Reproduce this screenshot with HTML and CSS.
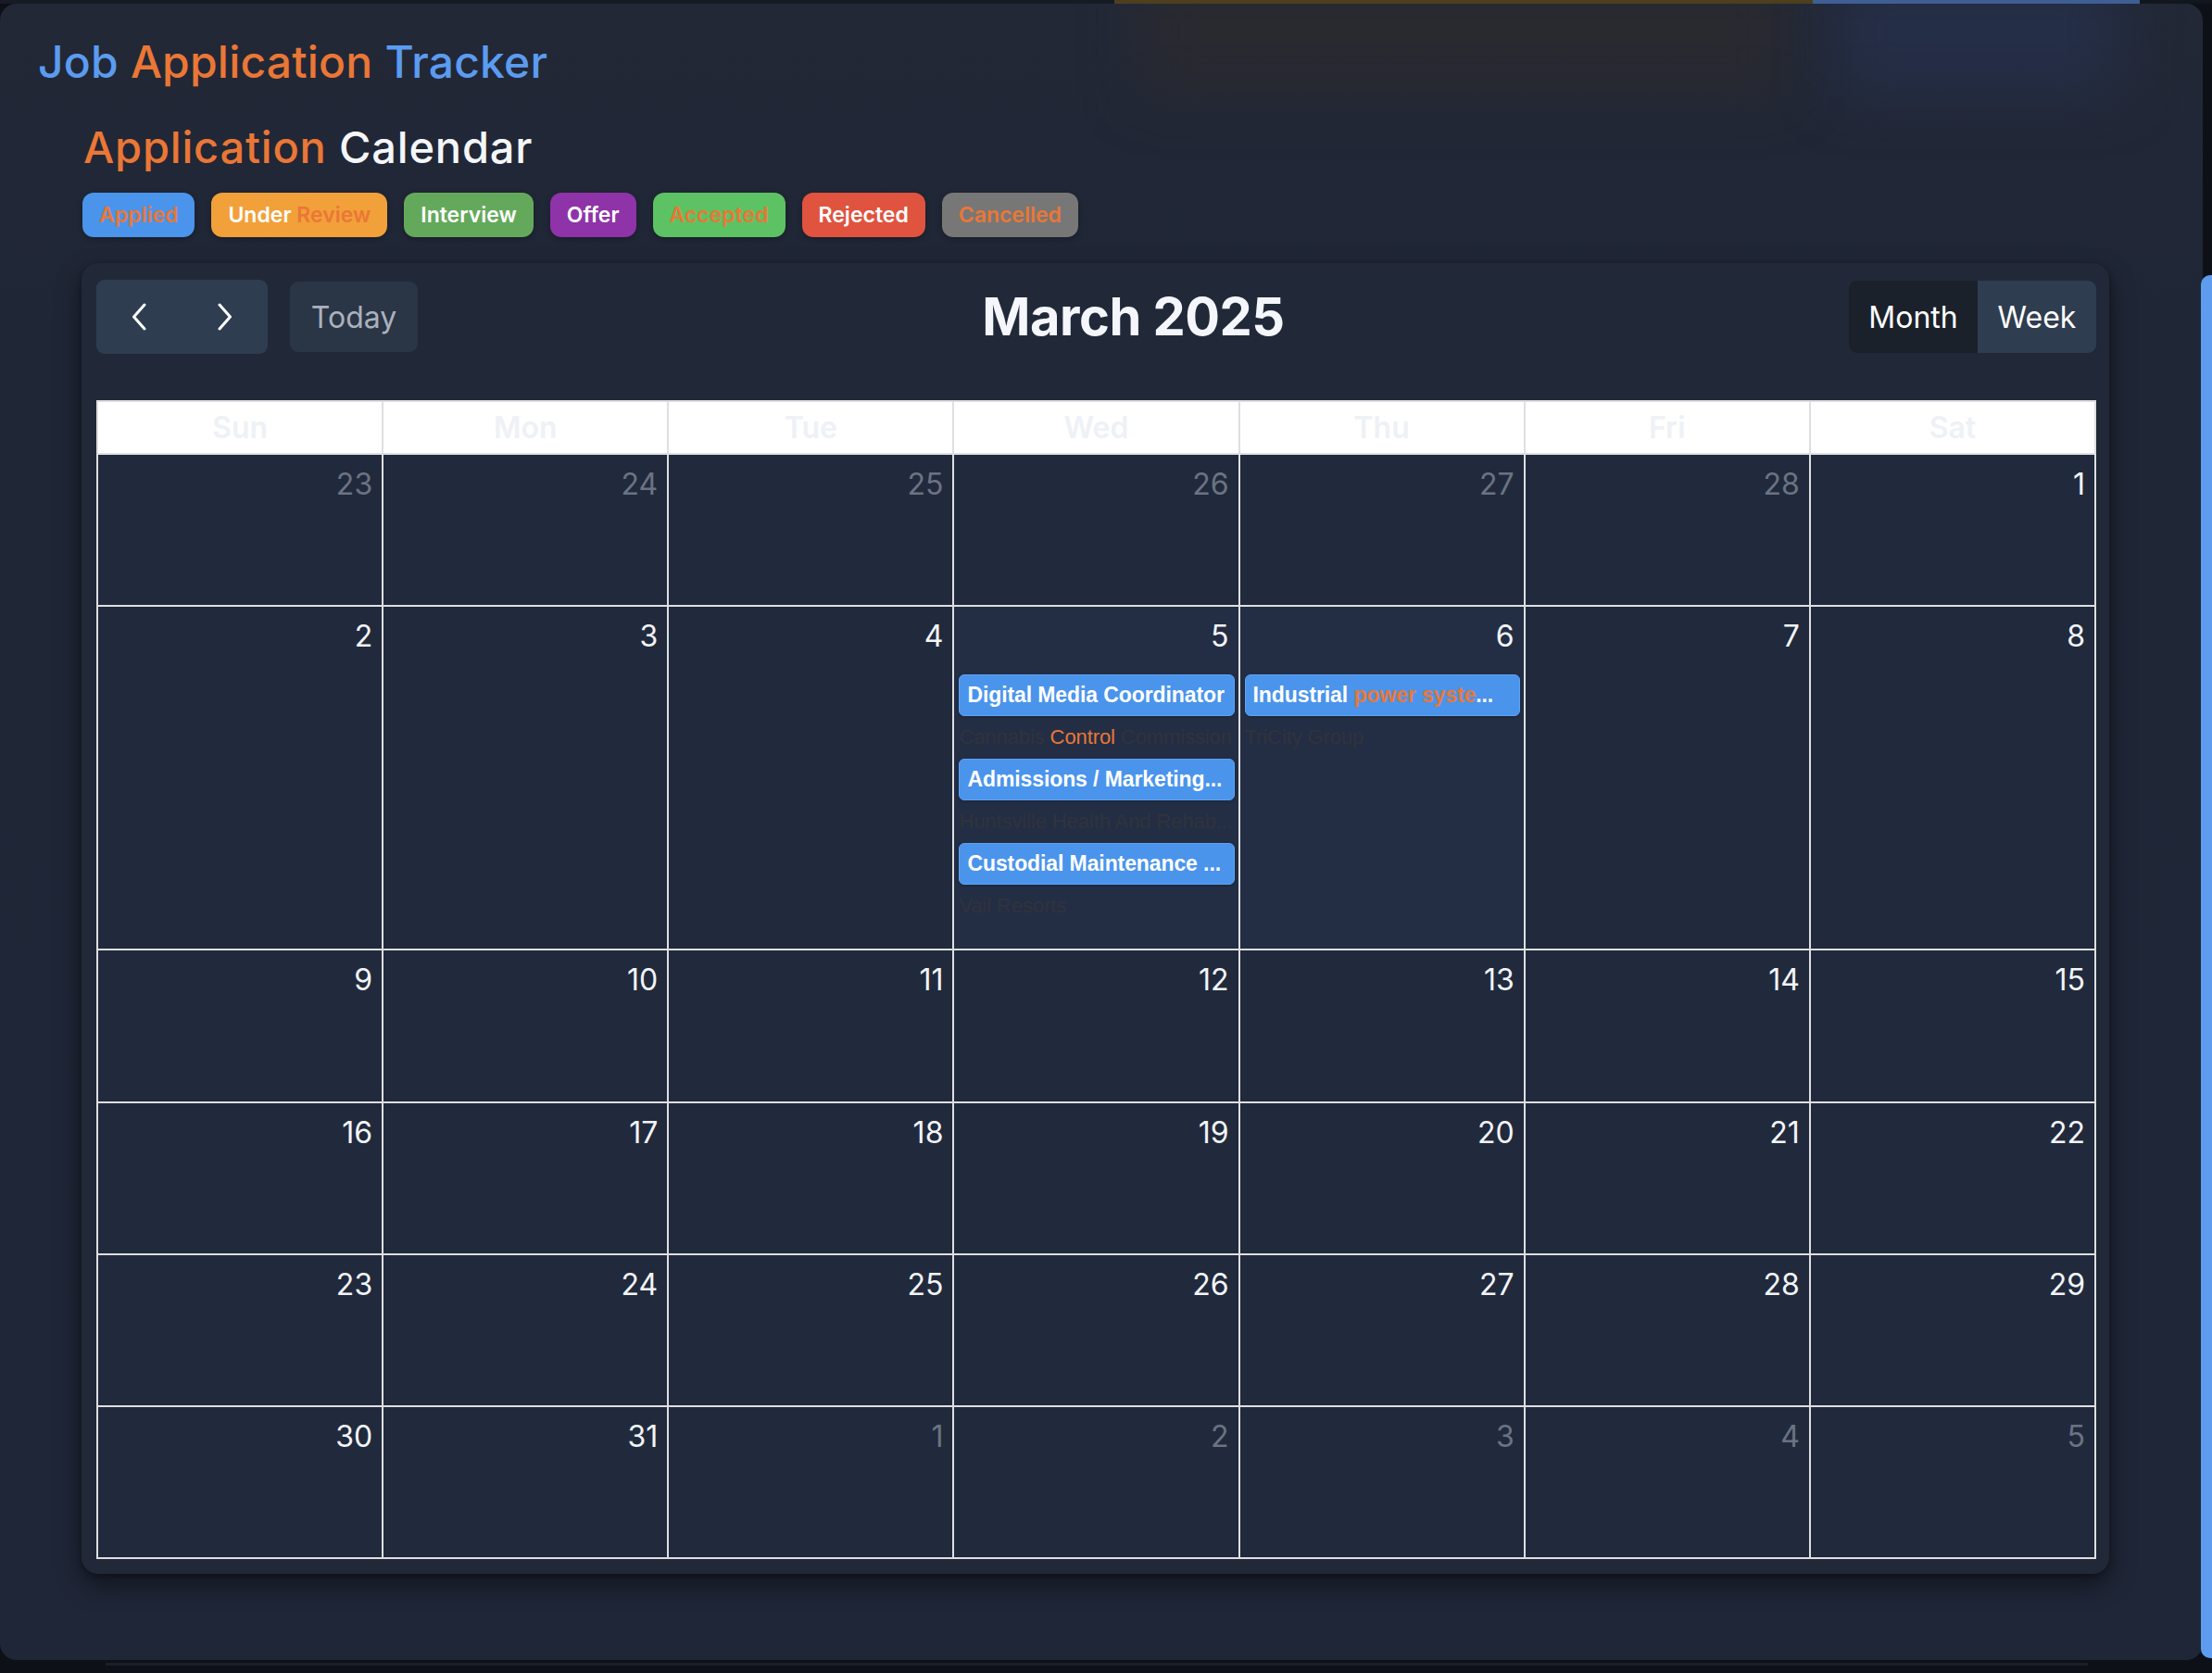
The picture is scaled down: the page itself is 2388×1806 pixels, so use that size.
FILE: index.html
```html
<!DOCTYPE html>
<html lang="en">
<head>
<meta charset="utf-8">
<title>Job Application Tracker</title>
<link rel="stylesheet" href="styles.css">
</head>
<body>
<div class="topbar">
  <span class="tb-seg tb-dark"></span>
  <span class="tb-seg tb-gold"></span>
  <span class="tb-seg tb-blue"></span>
  <span class="tb-seg tb-end"></span>
</div>
<main class="panel">
  <div class="glow glow-gold"></div>
  <div class="glow glow-blue"></div>
  <h1 class="app-title"><span class="c-blue">Job</span> <span class="c-orange">Application</span> <span class="c-blue">Tracker</span></h1>
  <section class="cal-section">
    <h2 class="cal-title"><span class="c-orange">Application</span> <span class="c-white">Calendar</span></h2>
    <div class="legend">
      <span class="badge b-applied"><span class="c-orange">Applied</span></span>
      <span class="badge b-review">Under <span class="c-orange">Review</span></span>
      <span class="badge b-interview">Interview</span>
      <span class="badge b-offer">Offer</span>
      <span class="badge b-accepted"><span class="c-orange">Accepted</span></span>
      <span class="badge b-rejected">Rejected</span>
      <span class="badge b-cancelled"><span class="c-orange">Cancelled</span></span>
    </div>
    <div class="cal-card">
      <div class="toolbar">
        <div class="tb-left">
          <div class="btn-group nav-group">
            <button class="nav-btn" aria-label="prev"><svg width="20" height="30" viewBox="0 0 20 30"><path d="M16 2 L4.5 15 L16 28" fill="none" stroke="#ffffff" stroke-width="3" stroke-linecap="round" stroke-linejoin="round"/></svg></button>
            <button class="nav-btn" aria-label="next"><svg width="20" height="30" viewBox="0 0 20 30"><path d="M4 2 L15.5 15 L4 28" fill="none" stroke="#ffffff" stroke-width="3" stroke-linecap="round" stroke-linejoin="round"/></svg></button>
          </div>
          <button class="today-btn">Today</button>
        </div>
        <div class="tb-title">March 2025</div>
        <div class="btn-group view-group">
          <button class="view-btn active">Month</button>
          <button class="view-btn">Week</button>
        </div>
      </div>
      <div class="month">
        <div class="dow">Sun</div><div class="dow">Mon</div><div class="dow">Tue</div><div class="dow">Wed</div><div class="dow">Thu</div><div class="dow">Fri</div><div class="dow">Sat</div>

        <div class="day other"><span class="num">23</span></div>
        <div class="day other"><span class="num">24</span></div>
        <div class="day other"><span class="num">25</span></div>
        <div class="day other"><span class="num">26</span></div>
        <div class="day other"><span class="num">27</span></div>
        <div class="day other"><span class="num">28</span></div>
        <div class="day"><span class="num">1</span></div>

        <div class="day"><span class="num">2</span></div>
        <div class="day"><span class="num">3</span></div>
        <div class="day"><span class="num">4</span></div>
        <div class="day hl">
          <span class="num">5</span>
          <div class="event"><div class="ev-title">Digital Media Coordinator</div></div>
          <div class="company">Cannabis <span class="c-orange">Control</span> Commission</div>
          <div class="event"><div class="ev-title">Admissions / Marketing...</div></div>
          <div class="company">Huntsville Health And Rehab...</div>
          <div class="event"><div class="ev-title">Custodial Maintenance ...</div></div>
          <div class="company">Vail Resorts</div>
        </div>
        <div class="day hl">
          <span class="num">6</span>
          <div class="event"><div class="ev-title">Industrial <span class="c-orange">power syste</span>...</div></div>
          <div class="company">TriCity Group</div>
        </div>
        <div class="day"><span class="num">7</span></div>
        <div class="day"><span class="num">8</span></div>

        <div class="day"><span class="num">9</span></div>
        <div class="day"><span class="num">10</span></div>
        <div class="day"><span class="num">11</span></div>
        <div class="day"><span class="num">12</span></div>
        <div class="day"><span class="num">13</span></div>
        <div class="day"><span class="num">14</span></div>
        <div class="day"><span class="num">15</span></div>

        <div class="day"><span class="num">16</span></div>
        <div class="day"><span class="num">17</span></div>
        <div class="day"><span class="num">18</span></div>
        <div class="day"><span class="num">19</span></div>
        <div class="day"><span class="num">20</span></div>
        <div class="day"><span class="num">21</span></div>
        <div class="day"><span class="num">22</span></div>

        <div class="day"><span class="num">23</span></div>
        <div class="day"><span class="num">24</span></div>
        <div class="day"><span class="num">25</span></div>
        <div class="day"><span class="num">26</span></div>
        <div class="day"><span class="num">27</span></div>
        <div class="day"><span class="num">28</span></div>
        <div class="day"><span class="num">29</span></div>

        <div class="day"><span class="num">30</span></div>
        <div class="day"><span class="num">31</span></div>
        <div class="day other"><span class="num">1</span></div>
        <div class="day other"><span class="num">2</span></div>
        <div class="day other"><span class="num">3</span></div>
        <div class="day other"><span class="num">4</span></div>
        <div class="day other"><span class="num">5</span></div>
      </div>
    </div>
  </section>
</main>
<div class="scroll-thumb"></div>
<div class="footer-line"></div>
</body>
</html>
```
FILE: styles.css
```css
* { box-sizing: border-box; }
html, body {
  margin: 0;
  padding: 0;
}
body {
  width: 2388px;
  height: 1806px;
  overflow: hidden;
  background: #0d1117;
  font-family: Inter, "Noto Sans", "Liberation Sans", sans-serif;
  position: relative;
}
.topbar {
  height: 4px;
  display: flex;
}
.tb-seg { display: block; height: 4px; }
.tb-dark { width: 1203px; background: #161b24; }
.tb-gold { width: 754px; background: #4e3f1e; }
.tb-blue { width: 353px; background: #3f5f94; }
.tb-end { flex: 1; background: #12161d; }

.panel {
  position: relative;
  width: 2378px;
  height: 1788px;
  border-radius: 18px;
  background:
    radial-gradient(ellipse 700px 500px at 1100px 900px, rgba(40,52,78,0.3), rgba(0,0,0,0) 70%),
    linear-gradient(180deg, #222836 0%, #1f2636 20%, #1f2637 100%);
  padding: 34px 0 0 41px;
  overflow: hidden;
}
.glow {
  position: absolute;
  top: -40px;
  height: 140px;
  pointer-events: none;
  filter: blur(30px);
}
.glow-gold {
  left: 1230px;
  width: 700px;
  background: rgba(48,44,44,0.55);
}
.glow-blue {
  left: 1980px;
  width: 310px;
  background: rgba(38,50,80,0.6);
}

.c-blue { color: #5b9bf0; }
.c-orange { color: #ea7736; }
.c-white { color: #f4f6fa; }

.app-title {
  position: relative;
  margin: 0;
  font-size: 48px;
  line-height: 58px;
  font-weight: 500;
  letter-spacing: 0.2px;
}
.cal-section {
  position: relative;
  margin: 35px 0 0 47px;
  width: 2189px;
}
.cal-title {
  margin: 0 0 0 2px;
  font-size: 47px;
  line-height: 56px;
  font-weight: 500;
  letter-spacing: 0.8px;
}
.legend {
  display: flex;
  gap: 18px;
  margin-top: 21px;
  margin-left: 1px;
}
.badge {
  display: inline-block;
  height: 48px;
  line-height: 48px;
  padding: 0 18px;
  border-radius: 12px;
  font-size: 23px;
  font-weight: 600;
  color: #ffffff;
  box-shadow: 0 2px 6px rgba(0,0,0,0.25);
  white-space: nowrap;
}
.b-applied { background: #4a94ec; }
.b-review { background: #f2a03a; }
.b-interview { background: #64a95b; }
.b-offer { background: #8e33a8; }
.b-accepted { background: #5cc264; }
.b-rejected { background: #e0533f; }
.b-cancelled { background: #777777; }

.cal-card {
  margin-top: 28px;
  background: #212939;
  border-radius: 18px;
  padding: 18px 14px 16px 16px;
  box-shadow: 0 12px 28px rgba(0,0,0,0.45), 0 2px 6px rgba(0,0,0,0.3);
}
.toolbar {
  display: flex;
  justify-content: space-between;
  align-items: center;
  height: 80px;
  margin-bottom: 50px;
}
.tb-left {
  display: flex;
  align-items: center;
  gap: 24px;
}
button {
  font-family: inherit;
  border: none;
  margin: 0;
  cursor: pointer;
}
.btn-group {
  display: flex;
  border-radius: 9px;
  overflow: hidden;
}
.nav-group {
  width: 185px;
  height: 80px;
  background: #2f3d50;
}
.nav-btn {
  flex: 1;
  background: transparent;
  display: flex;
  align-items: center;
  justify-content: center;
  padding: 0;
}
.today-btn {
  width: 138px;
  height: 76px;
  border-radius: 9px;
  background: #2a3546;
  color: #aab1bc;
  font-size: 32px;
  font-weight: 400;
}
.tb-title {
  font-size: 56px;
  font-weight: 700;
  color: #f4f6fb;
  letter-spacing: -0.5px;
  line-height: 80px;
}
.view-group {
  height: 78px;
}
.view-btn {
  height: 78px;
  background: #2f3d50;
  color: #ffffff;
  font-size: 32px;
  font-weight: 400;
  padding: 0 16px;
}
.view-btn.active {
  background: #1b212b;
  width: 139px;
}
.view-btn:not(.active) { width: 128px; }

.month {
  display: grid;
  grid-template-columns: repeat(7, 1fr);
  grid-template-rows: 55px 162px 369px 163px 162px 162px 162px;
  gap: 2px;
  padding: 2px;
  width: 2159px;
  background: #dedfe2;
}
.dow {
  background: #ffffff;
  color: #eef1f6;
  text-align: center;
  font-size: 32px;
  font-weight: 600;
  line-height: 55px;
}
.day {
  background: #212a3c;
  padding: 12px 10px 0 0;
  display: flex;
  flex-direction: column;
  min-width: 0;
  overflow: hidden;
}
.day.hl { background: #232e45; }
.num {
  display: block;
  text-align: right;
  font-size: 32px;
  line-height: 40px;
  color: #f2f4f8;
  font-weight: 400;
}
.day.other .num { color: #6b7383; }
.event {
  margin: 21px -6px 0 5px;
  height: 45px;
  background: #4a94ec;
  border: 1px solid #5ea2f2;
  border-radius: 6px;
  padding: 0 5px 0 8px;
  box-shadow: 0 1px 3px rgba(0,0,0,0.25);
}
.company + .event { margin-top: 0; }
.ev-title {
  font-family: "Liberation Sans", Arial, sans-serif;
  color: #ffffff;
  font-size: 23px;
  font-weight: 700;
  letter-spacing: -0.1px;
  line-height: 43px;
  white-space: nowrap;
  overflow: hidden;
  text-overflow: ellipsis;
}
.company {
  font-family: "Liberation Sans", Arial, sans-serif;
  margin: 0 -8px 0 5px;
  height: 46px;
  line-height: 46px;
  font-size: 22px;
  letter-spacing: -0.1px;
  color: #30333b;
  white-space: nowrap;
  overflow: hidden;
  text-overflow: ellipsis;
}

.scroll-thumb {
  position: absolute;
  left: 2376px;
  top: 297px;
  width: 12px;
  height: 1493px;
  background: #5e9cf0;
  border-radius: 10px 0 0 10px;
}
.footer-line {
  position: absolute;
  left: 114px;
  top: 1795px;
  width: 2140px;
  height: 3px;
  background: #1a1f28;
}
```
